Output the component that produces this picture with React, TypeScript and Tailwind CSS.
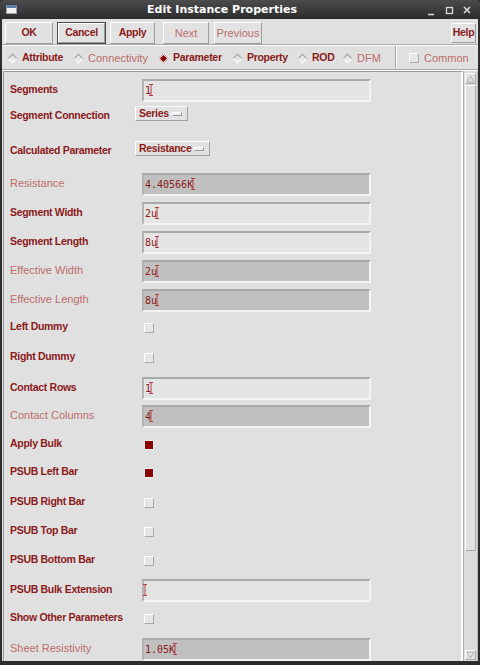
import React from "react";

type Kind = "field" | "drop" | "check";

interface IRow {
  label: string;
  kind: Kind;
  value?: string;
  disabled?: boolean;
  checked?: boolean;
  mt: string;
}

const rows: IRow[] = [
  { label: "Segments", kind: "field", value: "1", mt: "mt-[7px]" },
  { label: "Segment Connection", kind: "drop", value: "Series", mt: "mt-0" },
  { label: "Calculated Parameter", kind: "drop", value: "Resistance", mt: "mt-[12px]" },
  { label: "Resistance", kind: "field", value: "4.40566K", disabled: true, mt: "mt-[13px]" },
  { label: "Segment Width", kind: "field", value: "2u", mt: "mt-[6px]" },
  { label: "Segment Length", kind: "field", value: "8u", mt: "mt-[6px]" },
  { label: "Effective Width", kind: "field", value: "2u", disabled: true, mt: "mt-[6px]" },
  { label: "Effective Length", kind: "field", value: "8u", disabled: true, mt: "mt-[6px]" },
  { label: "Left Dummy", kind: "check", mt: "mt-[4px]" },
  { label: "Right Dummy", kind: "check", mt: "mt-[7px]" },
  { label: "Contact Rows", kind: "field", value: "1", mt: "mt-[8px]" },
  { label: "Contact Columns", kind: "field", value: "4", disabled: true, mt: "mt-[5px]" },
  { label: "Apply Bulk", kind: "check", checked: true, mt: "mt-[5px]" },
  { label: "PSUB Left Bar", kind: "check", checked: true, mt: "mt-[5px]" },
  { label: "PSUB Right Bar", kind: "check", mt: "mt-[7px]" },
  { label: "PSUB Top Bar", kind: "check", mt: "mt-[6px]" },
  { label: "PSUB Bottom Bar", kind: "check", mt: "mt-[6px]" },
  { label: "PSUB Bulk Extension", kind: "field", value: "", mt: "mt-[7px]" },
  { label: "Show Other Parameters", kind: "check", mt: "mt-[5px]" },
  { label: "Sheet Resistivity", kind: "field", value: "1.05K", disabled: true, mt: "mt-[8px]" },
];

const Cursor = () => (
  <svg width="5" height="12" viewBox="0 0 5 12" className="-ml-[2px] shrink-0">
    <path d="M0 0.5H4M2 0.5V11.5M0 11.5H4" stroke="#b04040" strokeWidth="1" fill="none" />
  </svg>
);

const CheckBox = ({ checked }: { checked?: boolean }) =>
  checked ? (
    <div className="w-[10px] h-[10px] border border-[#f0f0f0] bg-[#8b0000]" />
  ) : (
    <div className="w-[10px] h-[10px] border border-t-white border-l-white border-b-[#a8a8a8] border-r-[#a8a8a8] bg-[#e6e6e6]" />
  );

const Diamond = ({ on }: { on?: boolean }) => (
  <div
    className={
      on
        ? "w-[7px] h-[7px] rotate-45 bg-[#8b0000] border border-[#f0f0f0] shrink-0"
        : "w-[7px] h-[7px] rotate-45 bg-[#e6e6e6] border border-t-[#9c9c9c] border-l-[#9c9c9c] border-b-white border-r-white shrink-0"
    }
  />
);

const Field = ({ value, disabled }: { value?: string; disabled?: boolean }) => (
  <div
    className={`ml-[7px] w-[229px] h-[23px] flex items-center pl-[1px] pb-[1px] border-2 border-t-[#a9a9a9] border-l-[#b4b4b4] border-b-[#f4f4f4] border-r-[#f4f4f4] font-['DejaVu_Sans_Mono',monospace] text-[10px] text-[#8b1a1a] ${
      disabled ? "bg-[#c0c0c0]" : "bg-[#e4e4e4]"
    }`}
  >
    <span className="whitespace-pre">{value}</span>
    <Cursor />
  </div>
);

const Drop = ({ value }: { value?: string }) => (
  <div className="h-[15px] flex items-center pl-[3px] pr-[5px] gap-[3px] bg-[#e2e2e2] border border-t-white border-l-white border-b-[#a0a0a0] border-r-[#a0a0a0]">
    <span className="text-[10.5px] font-bold tracking-[-0.3px] text-[#8b1a1a] leading-none">{value}</span>
    <div className="w-[10px] h-[4px] bg-[#eeeeee] border border-t-white border-l-white border-b-[#9a9a9a] border-r-[#9a9a9a]" />
  </div>
);

const Row = ({ row }: { row: IRow }) => {
  const offset =
    row.kind === "field" ? "mb-[2px]" : row.kind === "drop" ? "mt-[4px]" : "mb-[3px]";
  const text = row.disabled
    ? "text-[11px] text-[#bd6d6d]"
    : "text-[10.5px] font-bold tracking-[-0.3px] text-[#8b1a1a]";
  return (
    <div className={`h-[23px] flex items-center shrink-0 ${row.mt}`}>
      <div className={`w-[131px] pl-[6px] leading-none whitespace-nowrap ${offset} ${text}`}>
        {row.label}
      </div>
      {row.kind === "field" && <Field value={row.value} disabled={row.disabled} />}
      {row.kind === "drop" && <Drop value={row.value} />}
      {row.kind === "check" && (
        <div className="ml-[9px]">
          <CheckBox checked={row.checked} />
        </div>
      )}
    </div>
  );
};

const Btn = ({
  label,
  className,
  disabled,
  dflt,
}: {
  label: string;
  className: string;
  disabled?: boolean;
  dflt?: boolean;
}) => (
  <div className={`${className} ${dflt ? "border border-[#4a4a4a]" : ""}`}>
    <div
      className={`w-full h-full flex items-center justify-center bg-[#e2e2e2] border border-t-white border-l-white border-b-[#9c9c9c] border-r-[#9c9c9c] ${
        disabled
          ? "text-[11px] text-[#bd6d6d]"
          : "text-[10.5px] font-bold tracking-[-0.3px] text-[#8b1a1a]"
      }`}
    >
      {label}
    </div>
  </div>
);

const Tab = ({
  label,
  w,
  on,
  disabled,
}: {
  label: string;
  w: string;
  on?: boolean;
  disabled?: boolean;
}) => (
  <div className={`${w} flex items-center shrink-0`}>
    <div className="w-[10px] flex justify-center">
      <Diamond on={on} />
    </div>
    <span
      className={`ml-[5px] whitespace-nowrap ${
        disabled
          ? "text-[11px] text-[#bd6d6d]"
          : "text-[10.5px] font-bold tracking-[-0.3px] text-[#8b1a1a]"
      }`}
    >
      {label}
    </span>
  </div>
);

const App = () => {
  return (
    <div className="w-[480px] h-[665px] bg-[#2c2c2c] flex flex-col overflow-hidden font-['Liberation_Sans',Arial,sans-serif]">
      {/* title bar */}
      <div className="h-[19px] shrink-0 flex items-center rounded-t-[4px] bg-gradient-to-b from-[#4c4c4c] to-[#2c2c2c]">
        <div className="ml-[6px] mr-[3px] w-[11px] h-[9px] bg-[#f2f2f2] border border-[#9aa4b0] border-t-[3px] border-t-[#5f7fa8]" />
        <div className="flex-1 text-center text-white font-bold text-[11px] font-['DejaVu_Sans',sans-serif] leading-none">
          Edit Instance Properties
        </div>
        <div className="w-[56px] flex items-center">
          <svg width="56" height="12" viewBox="0 0 56 12">
            <path d="M4 10.5H10" stroke="#d8d8d8" strokeWidth="1.5" />
            <rect x="22.5" y="3.5" width="6" height="6" stroke="#d8d8d8" strokeWidth="1.3" fill="none" />
            <path d="M40 3L46 9M46 3L40 9" stroke="#d8d8d8" strokeWidth="1.6" />
          </svg>
        </div>
      </div>

      {/* body */}
      <div className="flex-1 mx-[2px] mb-[4px] bg-[#e0e0e0] flex flex-col min-h-0">
        {/* buttons */}
        <div className="h-[26px] shrink-0 flex items-start pt-[3px] pl-[3px] pr-[2px] border-b border-b-[#a8a8a8]">
          <Btn label="OK" className="w-[48px] h-[22px]" />
          <Btn label="Cancel" className="ml-[4px] w-[49px] h-[22px]" dflt />
          <Btn label="Apply" className="ml-[4px] w-[45px] h-[22px]" />
          <Btn label="Next" className="ml-[8px] w-[46px] h-[22px]" disabled />
          <Btn label="Previous" className="ml-[5px] w-[48px] h-[22px]" disabled />
          <Btn label="Help" className="ml-auto mt-[1px] w-[25px] h-[20px]" />
        </div>

        {/* tabs */}
        <div className="h-[25px] shrink-0 flex items-stretch pl-[5px] border-t border-t-white border-b border-b-[#a8a8a8]">
          <div className="w-[388px] flex items-center pt-[1px]">
            <Tab label="Attribute" w="w-[66px]" />
            <Tab label="Connectivity" w="w-[85px]" disabled />
            <Tab label="Parameter" w="w-[74px]" on />
            <Tab label="Property" w="w-[65px]" />
            <Tab label="ROD" w="w-[45px]" />
            <Tab label="DFM" w="w-[50px]" disabled />
          </div>
          <div className="w-[2px] border-l border-l-[#a8a8a8] border-r border-r-white" />
          <div className="flex items-center pl-[12px] pt-[1px] gap-[5px]">
            <CheckBox />
            <span className="text-[11px] text-[#bd6d6d]">Common</span>
          </div>
        </div>

        {/* panel */}
        <div className="flex-1 min-h-0 flex border-t border-t-white">
          <div className="ml-[1px] w-[461px] flex flex-col overflow-hidden border-l border-t border-l-[#9a9a9a] border-t-[#9a9a9a] border-r-2 border-r-white">
            {rows.map((r) => (
              <Row key={r.label} row={r} />
            ))}
          </div>

          {/* scrollbar */}
          <div className="flex-1 flex flex-col border-l border-l-[#b0b0b0] border-r border-r-[#b8b8b8] bg-[#dcdcdc] px-[1px] pt-[2px] pb-[1px]">
            <div className="h-[11px] shrink-0 flex items-center justify-center bg-[#e2e2e2] border border-t-white border-l-white border-b-[#a8a8a8] border-r-[#a8a8a8]">
              <svg width="9" height="8" viewBox="0 0 9 8">
                <path d="M4.5 1L8 7H1Z" stroke="#b4b4b4" fill="none" />
              </svg>
            </div>
            <div className="mt-[1px] h-[466px] shrink-0 bg-[#e2e2e2] border border-t-white border-l-white border-b-[#a8a8a8] border-r-[#a8a8a8]" />
            <div className="flex-1" />
            <div className="h-[10px] shrink-0 flex items-center justify-center bg-[#e2e2e2] border border-t-white border-l-white border-b-[#a8a8a8] border-r-[#a8a8a8]">
              <svg width="9" height="8" viewBox="0 0 9 8">
                <path d="M1 1H8L4.5 7Z" stroke="#b4b4b4" fill="none" />
              </svg>
            </div>
          </div>
        </div>
      </div>
    </div>
  );
};

export default App;
